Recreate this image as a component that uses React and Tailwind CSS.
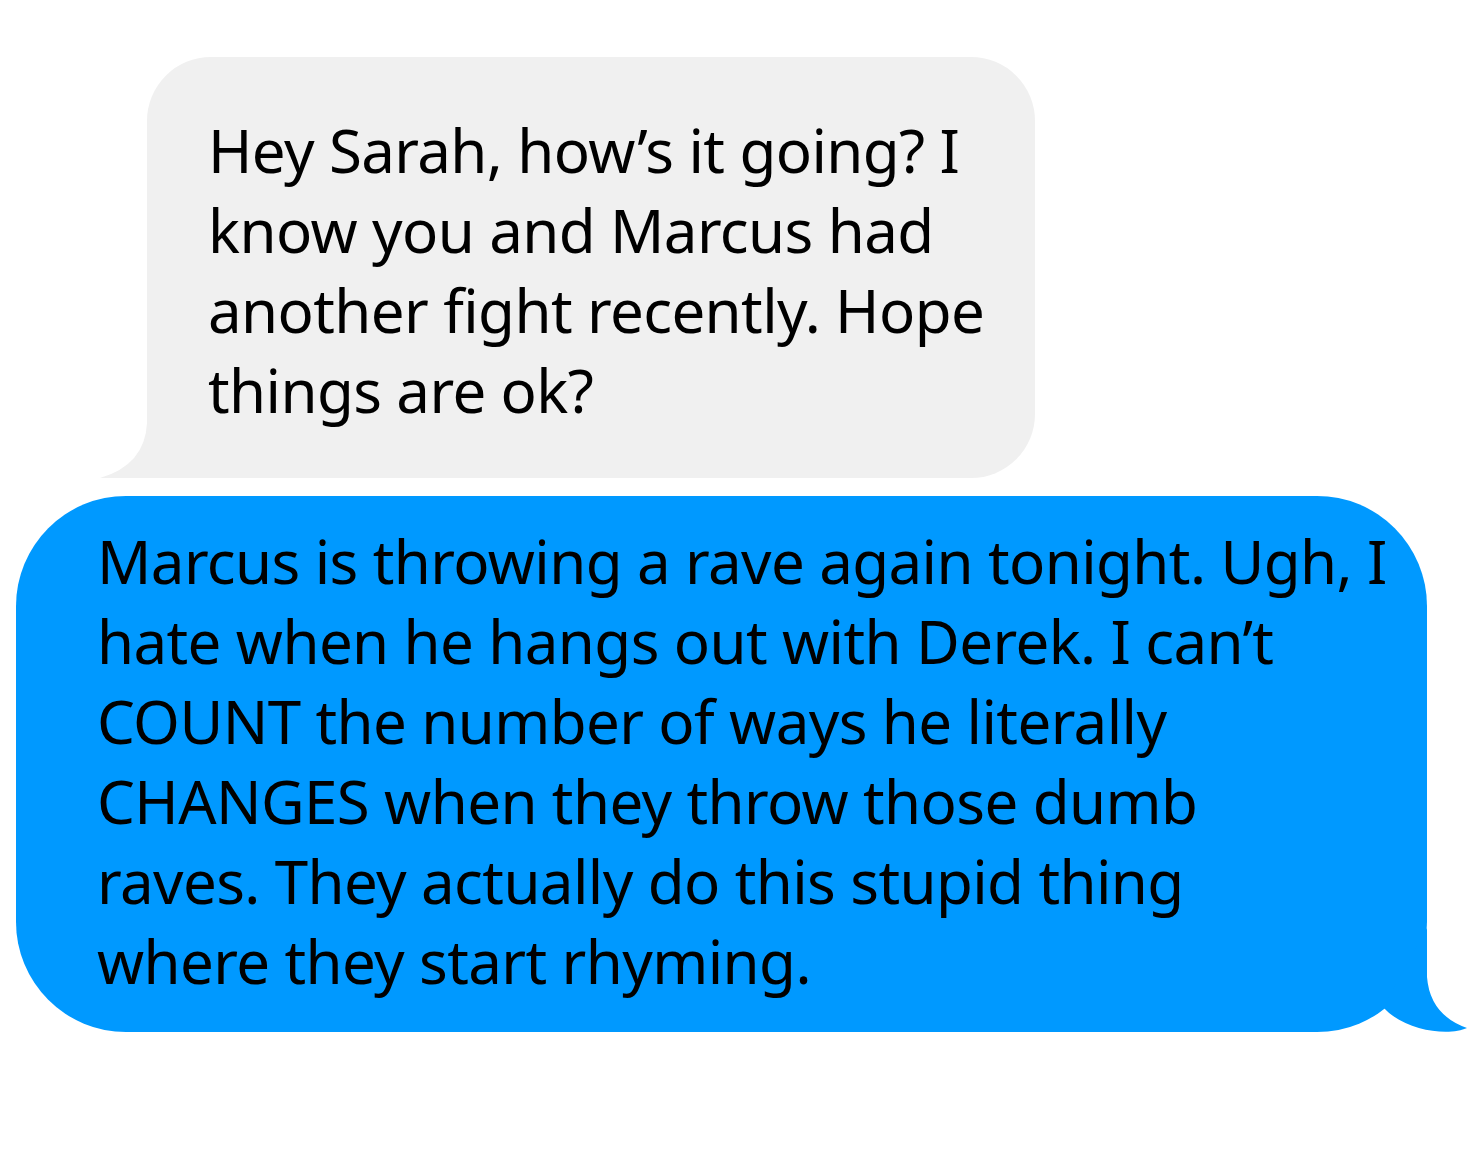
import React from "react";

const greyLines = [
  "Hey Sarah, how’s it going? I",
  "know you and Marcus had",
  "another fight recently. Hope",
  "things are ok?",
];

const blueLines = [
  "Marcus is throwing a rave again tonight. Ugh, I",
  "hate when he hangs out with Derek. I can’t",
  "COUNT the number of ways he literally",
  "CHANGES when they throw those dumb",
  "raves. They actually do this stupid thing",
  "where they start rhyming.",
];

function Lines({ lines }) {
  return lines.map((line) => (
    <div key={line} className="whitespace-nowrap">
      {line}
    </div>
  ));
}

export default function App() {
  return (
    <div className="w-[1480px] h-[1151px] bg-white flex flex-col font-['Noto_Sans',sans-serif] text-[60px] leading-[80px] tracking-[-0.6px] text-black">
      {/* incoming message */}
      <div className="relative ml-[147px] mt-[57px] w-[888px] h-[421px] bg-[#f0f0f0] rounded-[64px] rounded-bl-none pl-[61px] pt-[53px]">
        <svg className="absolute left-[-47px] bottom-0 overflow-visible" width="48" height="60" viewBox="0 0 48 60">
          <path d="M48,0 L47,5 Q45,47 0,60 L48,60 Z" fill="#f0f0f0" />
        </svg>
        <Lines lines={greyLines} />
      </div>

      {/* outgoing message */}
      <div className="relative ml-[16px] mt-[18px] w-[1411px] h-[536px] bg-[#0099ff] rounded-[110px] pl-[81px] pt-[25px]">
        <svg className="absolute left-[1364px] top-[424px] overflow-visible" width="90" height="112" viewBox="0 0 90 112">
          <path d="M47,8 L47,57 Q50,95 87,108 C70,116 25,112 3,87 Z" fill="#0099ff" />
        </svg>
        <Lines lines={blueLines} />
      </div>
    </div>
  );
}
